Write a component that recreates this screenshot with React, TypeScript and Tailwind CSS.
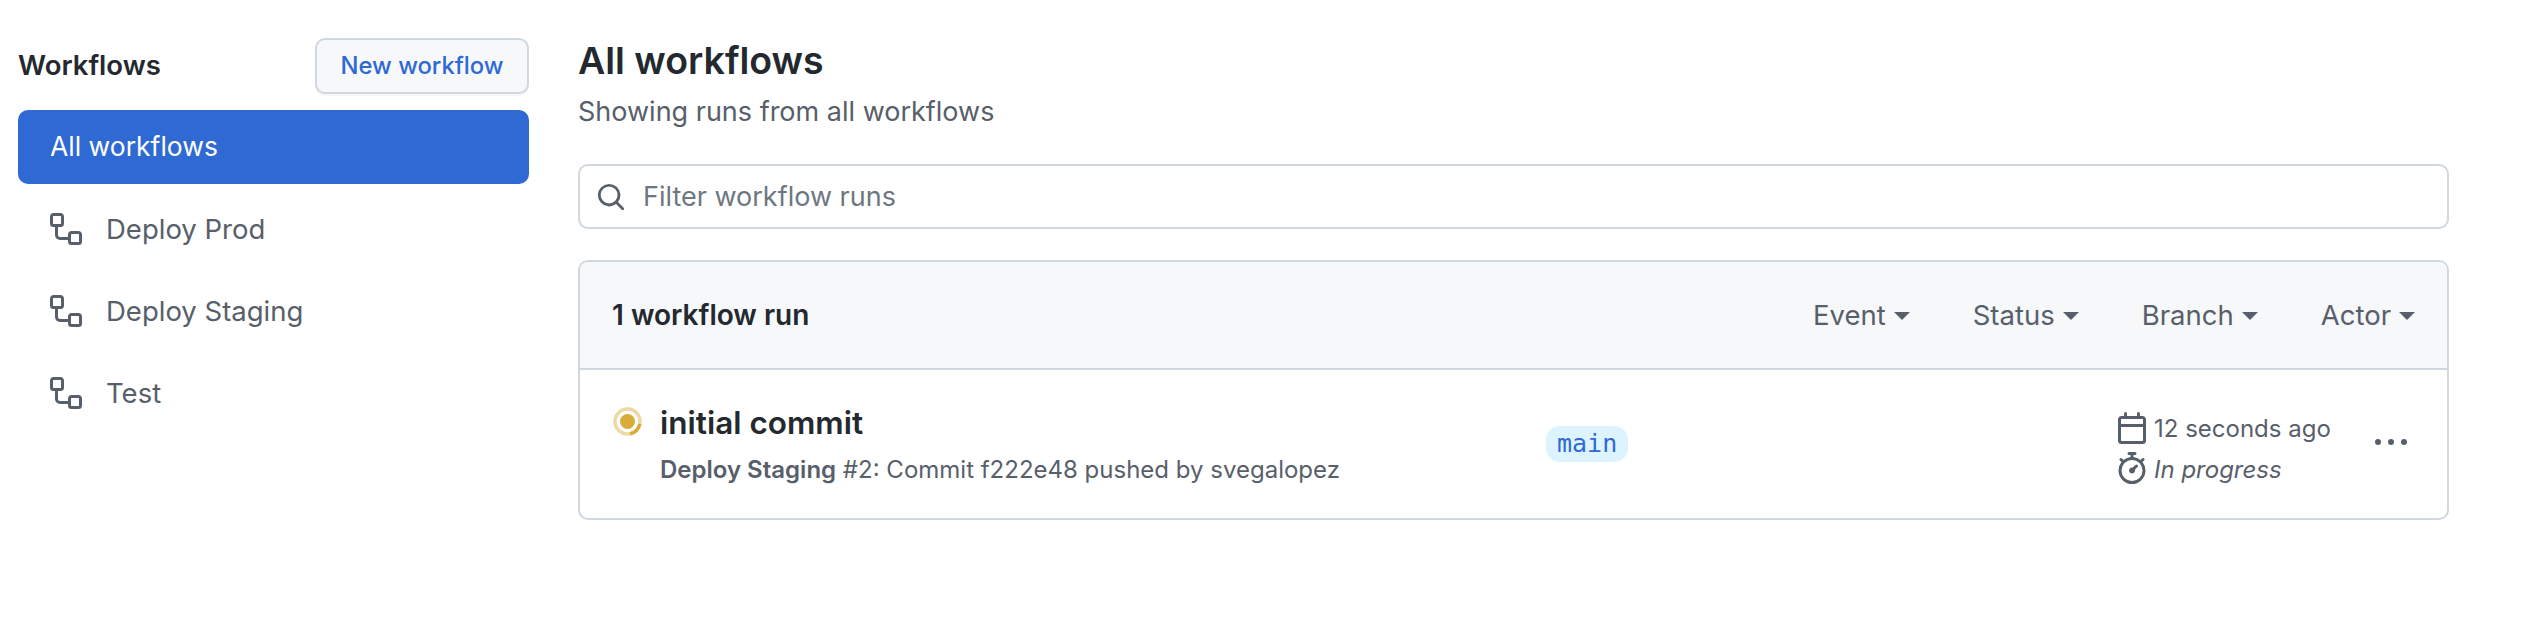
const Workflow = () => (
  <svg viewBox="0 0 16 16" className="w-[32px] h-[32px] fill-[#57606a] shrink-0">
    <path d="M0 1.75C0 .784.784 0 1.75 0h3.5C6.216 0 7 .784 7 1.75v3.5A1.75 1.75 0 0 1 5.25 7H4v4a1 1 0 0 0 1 1h4v-1.25C9 9.784 9.784 9 10.75 9h3.5c.966 0 1.75.784 1.75 1.75v3.5A1.75 1.75 0 0 1 14.25 16h-3.5A1.75 1.75 0 0 1 9 14.25v-.75H5A2.5 2.5 0 0 1 2.5 11V7h-.75A1.75 1.75 0 0 1 0 5.25Zm1.75-.25a.25.25 0 0 0-.25.25v3.5c0 .138.112.25.25.25h3.5a.25.25 0 0 0 .25-.25v-3.5a.25.25 0 0 0-.25-.25Zm9 9a.25.25 0 0 0-.25.25v3.5c0 .138.112.25.25.25h3.5a.25.25 0 0 0 .25-.25v-3.5a.25.25 0 0 0-.25-.25Z" />
  </svg>
);

const Caret = () => (
  <span className="ml-[8px] w-0 h-0 mt-[2px] border-x-[8px] border-x-transparent border-t-[8px] border-t-[#57606a]" />
);

const Filter = ({ label }: { label: string }) => (
  <span className="flex items-center text-[27.5px] text-[#57606a]">
    <span className="mt-[1px]">{label}</span>
    <Caret />
  </span>
);

const Row = ({ label }: { label: string }) => (
  <div className="h-[82px] flex items-center pl-[32px] gap-[24px] text-[27.5px] text-[#57606a]">
    <Workflow />
    <span className="mt-[1px]">{label}</span>
  </div>
);

export default function App() {
  return (
    <div className="w-[2530px] h-[630px] bg-white flex pl-[18px] pt-[38px] font-['Inter',sans-serif] text-[#24292f] overflow-hidden">
      <aside className="w-[511px] shrink-0">
        <div className="flex items-center justify-between h-[55px] mb-[17px]">
          <span className="text-[27.5px] font-semibold mt-[1px]">Workflows</span>
          <button className="w-[214px] h-[56px] rounded-[10px] border-2 border-[#d0d7de] bg-[#f6f8fa] text-[23.8px] font-medium text-[#2f69d4] shadow-[0_2px_0_rgba(27,31,36,0.04)]">
            New workflow
          </button>
        </div>
        <div className="h-[74px] rounded-[10px] bg-[#2f69d4] text-white text-[26.5px] flex items-center pl-[32px]">
          All workflows
        </div>
        <div className="mt-[4px]">
          <Row label="Deploy Prod" />
          <Row label="Deploy Staging" />
          <Row label="Test" />
        </div>
      </aside>
      <main className="ml-[49px] w-[1871px] shrink-0">
        <h1 className="text-[37.5px] font-semibold leading-[46px]">All workflows</h1>
        <p className="text-[27px] text-[#57606a] leading-[40px] mt-[8px]">Showing runs from all workflows</p>
        <div className="mt-[32px] h-[65px] rounded-[10px] border-2 border-[#d0d7de] flex items-center pl-[16px] gap-[17px] text-[27px] text-[#6e7781]">
          <svg viewBox="0 0 16 16" className="w-[30px] h-[30px] fill-[#57606a] mt-[1px]">
            <path d="M10.68 11.74a6 6 0 0 1-7.922-8.982 6 6 0 0 1 8.982 7.922l3.04 3.04a.749.749 0 0 1-.326 1.275.749.749 0 0 1-.734-.215ZM11.5 7a4.499 4.499 0 1 0-8.997 0A4.499 4.499 0 0 0 11.5 7Z" />
          </svg>
          <span className="mt-[1px]">Filter workflow runs</span>
        </div>
        <section className="mt-[31px] h-[260px] rounded-[10px] border-2 border-[#d0d7de] overflow-hidden">
          <header className="h-[108px] bg-[#f6f8fa] border-b-2 border-[#d0d7de] flex items-center justify-between pl-[32px] pr-[32px]">
            <span className="text-[28px] font-semibold">1 workflow run</span>
            <div className="flex items-center gap-[63px]">
              <Filter label="Event" />
              <Filter label="Status" />
              <Filter label="Branch" />
              <Filter label="Actor" />
            </div>
          </header>
          <div className="h-[148px] flex items-center pl-[33px] pr-[40px]">
            <div className="w-[933px] flex items-start gap-[18px] shrink-0 self-start pt-[35px]">
              <svg viewBox="0 0 29 29" className="w-[29px] h-[29px] shrink-0 mt-[2px]" fill="none">
                <circle cx="14.5" cy="14.5" r="12.5" stroke="#d9ab38" strokeOpacity="0.45" strokeWidth="3.5" />
                <path d="M17 26.8A12.5 12.5 0 0 0 26.8 17" stroke="#d9ab38" strokeWidth="3.5" />
                <circle cx="14.5" cy="14.5" r="7.5" fill="#d9ab38" />
              </svg>
              <div>
                <div className="text-[31.5px] font-semibold leading-[36px]">initial commit</div>
                <div className="text-[24px] text-[#57606a] leading-[30px] mt-[14px] whitespace-nowrap">
                  <b className="font-semibold">Deploy Staging</b> #2: Commit f222e48 pushed by svegalopez
                </div>
              </div>
            </div>
            <span className="px-[11px] h-[36px] leading-[36px] rounded-[14px] bg-[#ddf4ff] text-[#2f69d4] text-[25px] font-['DejaVu_Sans_Mono',monospace]">
              main
            </span>
            <div className="ml-auto flex items-center">
              <div className="text-[24px] text-[#57606a] w-[259px] pt-[8px]">
                <div className="flex items-center gap-[6px] h-[40px]">
                  <svg viewBox="0 0 16 16" className="w-[32px] h-[32px] fill-[#57606a]">
                    <path d="M4.75 0a.75.75 0 0 1 .75.75V2h5V.75a.75.75 0 0 1 1.5 0V2h1.25c.966 0 1.75.784 1.75 1.75v10.5A1.75 1.75 0 0 1 13.25 16H2.75A1.75 1.75 0 0 1 1 14.25V3.75C1 2.784 1.784 2 2.75 2H4V.75A.75.75 0 0 1 4.75 0ZM2.5 7.5v6.75c0 .138.112.25.25.25h10.5a.25.25 0 0 0 .25-.25V7.5Zm10.75-4H2.75a.25.25 0 0 0-.25.25V6h11V3.75a.25.25 0 0 0-.25-.25Z" />
                  </svg>
                  <span className="mt-[2px]">12 seconds ago</span>
                </div>
                <div className="flex items-center gap-[6px] h-[40px]">
                  <svg viewBox="0 0 16 16" className="w-[32px] h-[32px] fill-[#57606a]">
                    <path d="M5.75.75A.75.75 0 0 1 6.5 0h3a.75.75 0 0 1 0 1.5h-.75v1l-.001.041a6.724 6.724 0 0 1 3.464 1.435l.007-.006.75-.75a.749.749 0 0 1 1.275.326.749.749 0 0 1-.215.734l-.75.75-.006.007a6.75 6.75 0 1 1-10.548 0L2.72 5.03l-.75-.75a.751.751 0 0 1 .018-1.042.751.751 0 0 1 1.042-.018l.75.75.007.006A6.72 6.72 0 0 1 7.25 2.541V1.5H6.5a.75.75 0 0 1-.75-.75ZM8 14.5a5.25 5.25 0 1 0-.001-10.501A5.25 5.25 0 0 0 8 14.5Zm.389-6.7 1.33-1.33a.75.75 0 1 1 1.061 1.06L9.45 8.861A1.503 1.503 0 0 1 8 10.75a1.499 1.499 0 1 1 .389-2.95Z" />
                  </svg>
                  <span className="italic mt-[3px]">In progress</span>
                </div>
              </div>
              <svg viewBox="0 0 16 16" className="w-[32px] h-[32px] fill-[#57606a] mb-[3px]">
                <path d="M8 9a1.5 1.5 0 1 0 0-3 1.5 1.5 0 0 0 0 3ZM1.5 9a1.5 1.5 0 1 0 0-3 1.5 1.5 0 0 0 0 3Zm13 0a1.5 1.5 0 1 0 0-3 1.5 1.5 0 0 0 0 3Z" />
              </svg>
            </div>
          </div>
        </section>
      </main>
    </div>
  );
}
